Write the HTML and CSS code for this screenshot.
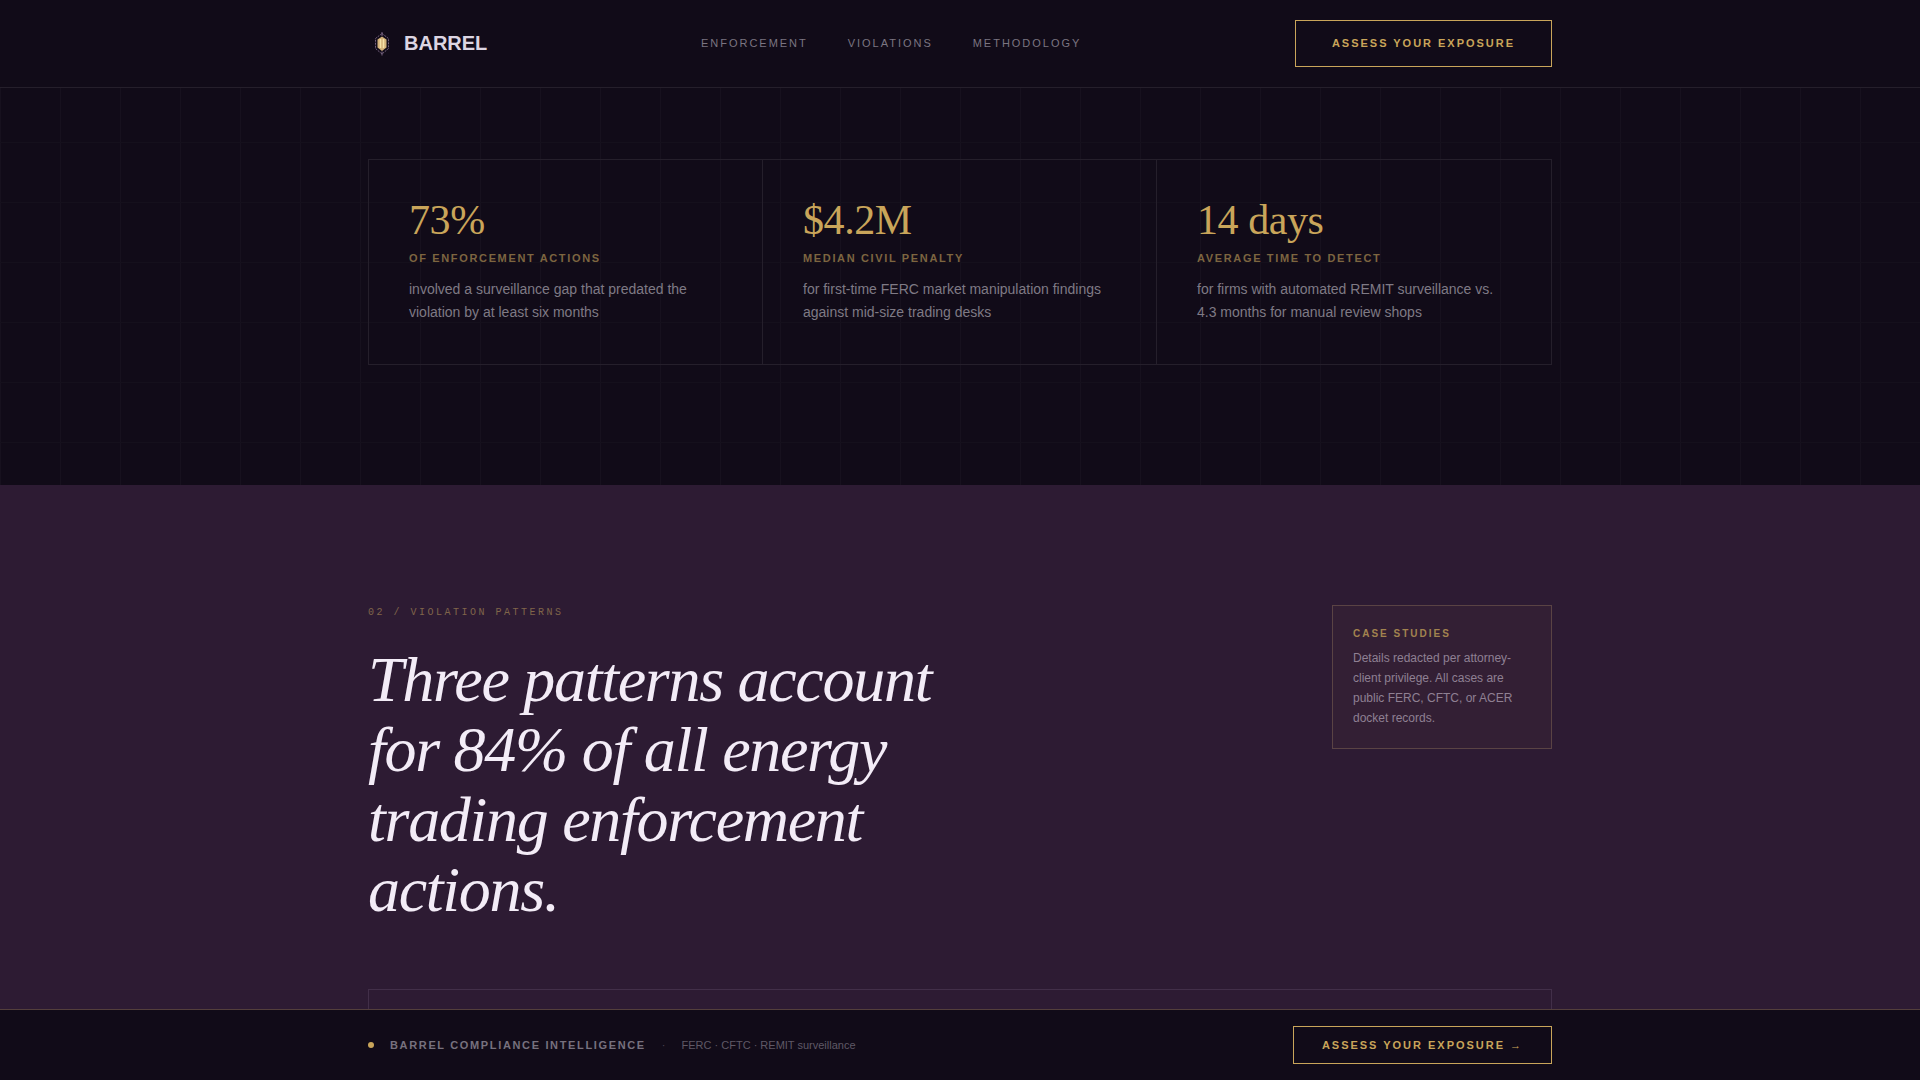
FILE: index.html
```html
<!DOCTYPE html>
<html lang="en">
<head>
  <meta charset="UTF-8">
  <meta name="viewport" content="width=device-width, initial-scale=1.0">
  <title>Barrel Compliance Intelligence</title>
  <link rel="stylesheet" href="styles.css">
</head>
<body>

  <!-- Header -->
  <header class="site-header">
    <div class="container header-inner">
      <a href="#" class="logo">
        <svg class="logo-mark" width="28" height="28" viewBox="0 0 28 28" fill="none" aria-hidden="true">
          <path d="M14 3.500L20.500 8.500V18.500L14 24L7.500 18.500V8.500Z" stroke="#a58bb0" stroke-opacity=".65" stroke-dasharray="2 1"/>
          <path d="M14 6.500L18.500 9.500V17.500L14 21L9.500 17.500V9.500Z" fill="#d3b27a"/>
          <path d="M12.500 9V18M15.500 9V18" stroke="#f6e3a8" stroke-width="1.500"/>
          <path d="M14 2V6M14 21.500V25.500" stroke="#a58bb0" stroke-opacity=".7"/>
        </svg>
        <span>BARREL</span>
      </a>
      <nav class="nav">
        <a href="#enforcement">Enforcement</a>
        <a href="#violations">Violations</a>
        <a href="#methodology">Methodology</a>
      </nav>
      <button type="button" class="btn">Assess your exposure</button>
    </div>
  </header>

  <main>
    <!-- Enforcement stats -->
    <section class="enforcement" id="enforcement">
      <div class="container">
        <div class="stats">
          <div class="stat">
            <div class="stat-number">73%</div>
            <div class="stat-label">of enforcement actions</div>
            <p class="stat-text">involved a surveillance gap that predated the violation by at least six months</p>
          </div>
          <div class="stat">
            <div class="stat-number">$4.2M</div>
            <div class="stat-label">median civil penalty</div>
            <p class="stat-text">for first-time FERC market manipulation findings against mid-size trading desks</p>
          </div>
          <div class="stat">
            <div class="stat-number">14 days</div>
            <div class="stat-label">average time to detect</div>
            <p class="stat-text">for firms with automated REMIT surveillance vs. 4.3 months for manual review shops</p>
          </div>
        </div>
      </div>
    </section>

    <!-- Violation patterns -->
    <section class="violations" id="violations">
      <div class="container">
        <div class="section-head">
          <div class="section-title">
            <div class="eyebrow">02 / Violation patterns</div>
            <h2>Three patterns account for 84% of all energy trading enforcement actions.</h2>
          </div>
          <aside class="note">
            <h3>Case studies</h3>
            <p>Details redacted per attorney-client privilege. All cases are public FERC, CFTC, or ACER docket records.</p>
          </aside>
        </div>
        <div class="cases"></div>
      </div>
    </section>
  </main>

  <!-- Sticky bottom bar -->
  <div class="bottom-bar">
    <div class="container bottom-inner">
      <div class="bottom-info">
        <span class="dot"></span>
        <strong>Barrel compliance intelligence</strong>
        <span class="sep">·</span>
        <span class="scope">FERC · CFTC · REMIT surveillance</span>
      </div>
      <button type="button" class="btn btn-small">Assess your exposure →</button>
    </div>
  </div>

</body>
</html>
```
FILE: styles.css
```css
* {
  box-sizing: border-box;
  margin: 0;
  padding: 0;
}

body {
  font-family: "Liberation Sans", Arial, sans-serif;
  background: #110b18;
  color: #f3ecf7;
}

a {
  color: inherit;
  text-decoration: none;
}

main {
  min-height: 100vh;
  display: flex;
  flex-direction: column;
}

.container {
  width: 100%;
  max-width: 1280px;
  margin: 0 auto;
  padding: 0 48px;
}

/* Header */
.site-header {
  position: fixed;
  top: 0;
  left: 0;
  right: 0;
  z-index: 10;
  padding: 20px 0;
  background: #110b18;
  border-bottom: 1px solid #251f2b;
}

.header-inner,
.bottom-inner {
  display: flex;
  align-items: center;
  justify-content: space-between;
}

.logo {
  display: flex;
  align-items: center;
  gap: 8px;
  font-size: 20px;
  font-weight: bold;
  color: #dcd5e2;
}

.nav {
  display: flex;
  gap: 40px;
  font-size: 11px;
  line-height: 13px;
  letter-spacing: 0.18em;
  text-transform: uppercase;
  color: #7b7581;
}

.btn {
  font-family: inherit;
  font-size: 11px;
  font-weight: bold;
  line-height: 13px;
  letter-spacing: 0.18em;
  text-transform: uppercase;
  color: #c9a55a;
  background: transparent;
  border: 1px solid #c9a55a;
  padding: 16px 36px;
  cursor: pointer;
}

.btn-small {
  line-height: 12px;
  padding: 12px 28px;
}

/* Enforcement stats */
.enforcement {
  padding: 159px 0 120px;
  background-image:
    linear-gradient(#15101c 1px, transparent 1px),
    linear-gradient(90deg, #17111e 1px, transparent 1px);
  background-size: 60px 60px;
  background-position: 0 22px;
}

.stats {
  display: grid;
  grid-template-columns: repeat(3, 1fr);
  border: 1px solid #251f2b;
}

.stat {
  padding: 40px;
  border-right: 1px solid #251f2b;
}

.stat:last-child {
  border-right: none;
}

.stat-number {
  font-family: "Liberation Serif", "Times New Roman", serif;
  font-size: 42px;
  line-height: 40px;
  letter-spacing: -0.01em;
  color: #c9a55a;
  margin-bottom: 12px;
}

.stat-label {
  font-size: 11px;
  line-height: 12px;
  font-weight: bold;
  letter-spacing: 0.15em;
  text-transform: uppercase;
  color: #7d6540;
  margin-bottom: 14px;
}

.stat-text {
  font-size: 14px;
  line-height: 23px;
  color: #7f7a85;
}

/* Violation patterns */
.violations {
  flex: 1;
  display: flex;
  padding-top: 120px;
  background: #2d1b33;
}

.violations .container {
  display: flex;
  flex-direction: column;
}

.section-head {
  display: flex;
  align-items: flex-start;
  justify-content: space-between;
  margin-bottom: 64px;
}

.section-title {
  max-width: 640px;
}

.eyebrow {
  font-family: "Liberation Mono", "Courier New", monospace;
  font-size: 10px;
  line-height: 16px;
  letter-spacing: 0.25em;
  text-transform: uppercase;
  color: #80654a;
  margin-bottom: 24px;
}

h2 {
  font-family: "Liberation Serif", "Times New Roman", serif;
  font-size: 64px;
  line-height: 70px;
  font-weight: normal;
  font-style: italic;
  letter-spacing: -0.02em;
}

.note {
  width: 220px;
  padding: 20px;
  background: #331f34;
  border: 1px solid #5a4344;
}

.note h3 {
  font-size: 10px;
  line-height: 16px;
  letter-spacing: 0.2em;
  text-transform: uppercase;
  color: #a2834f;
  margin-bottom: 6px;
}

.note p {
  font-size: 12px;
  line-height: 20px;
  color: #8f8093;
}

.cases {
  flex: 1;
  border: 1px solid #422f49;
}

/* Bottom bar */
.bottom-bar {
  position: fixed;
  left: 0;
  right: 0;
  bottom: 0;
  z-index: 10;
  padding: 16px 0;
  background: #110b18;
  border-top: 1px solid #533f3c;
}

.bottom-info {
  display: flex;
  align-items: center;
  gap: 16px;
  font-size: 11px;
  color: #5f5966;
}

.bottom-info strong {
  letter-spacing: 0.15em;
  text-transform: uppercase;
  color: #77717e;
}

.dot {
  width: 6px;
  height: 6px;
  border-radius: 50%;
  background: #c9a55a;
}

.sep {
  color: #4a4451;
}
```
